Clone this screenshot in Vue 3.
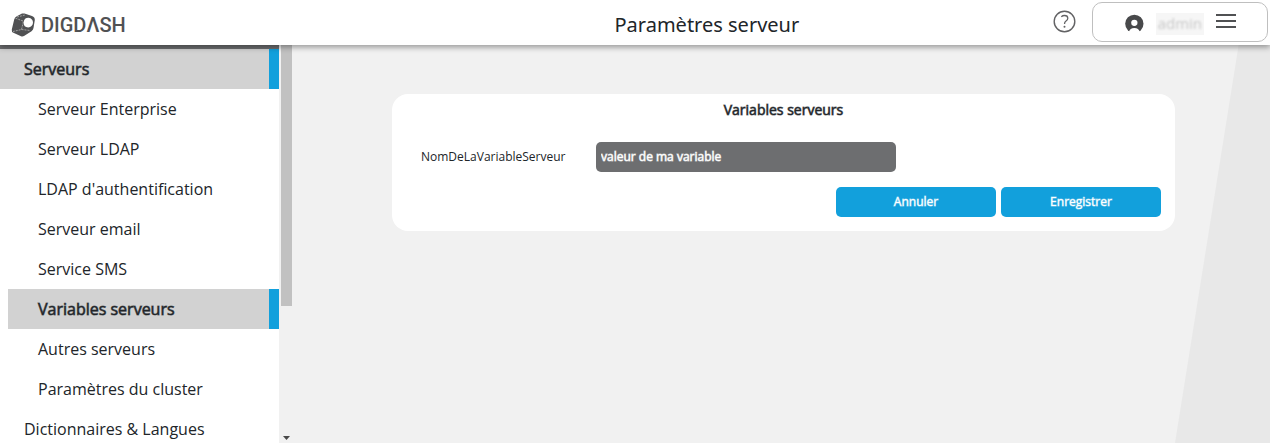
<script setup>
import { ref } from 'vue'

const entries = [
  { label: 'Serveurs', level: 0, active: true },
  { label: 'Serveur Enterprise', level: 1 },
  { label: 'Serveur LDAP', level: 1 },
  { label: "LDAP d'authentification", level: 1 },
  { label: 'Serveur email', level: 1 },
  { label: 'Service SMS', level: 1 },
  { label: 'Variables serveurs', level: 1, active: true },
  { label: 'Autres serveurs', level: 1 },
  { label: 'Paramètres du cluster', level: 1 },
  { label: 'Dictionnaires & Langues', level: 0 },
]
const value = ref('valeur de ma variable')
</script>

<template>
  <div class="page">
    <header class="topbar">
      <a class="brand" href="#">
        <svg width="25" height="24" viewBox="0 0 25 24" aria-hidden="true">
          <path d="M11 .6 Q12 .2 13.5 .6 L21 3 Q24 4 23.8 7 L22.5 15 Q22.2 17 20.5 18.2 L13 23 Q11.5 23.8 10 23.2 L2.4 19.8 Q.4 18.8 .8 16.4 L3.2 6.6 Q3.8 4.2 5.8 3.2 Z" fill="#505153" />
          <path d="M4.5 5.2 L12.5 8.2 L10.5 16.5 L2 18.5 M10.5 16.5 L19 17.5 M6 4 L14 2" fill="none" stroke="#b4b4b4" stroke-width=".8" stroke-dasharray="2 1" />
          <path d="M13.2 7 Q14.5 4.6 17.5 4.8 Q22 5.6 22 9.8 Q21.4 14 17.2 14.6 Q12.6 14 12.6 10 Z" fill="#fff" />
        </svg>
        <span>DIGDΛSH</span>
      </a>
      <h1>Paramètres serveur</h1>
      <button class="icon-button" type="button" aria-label="Aide">
        <svg width="24" height="24" viewBox="0 0 24 24" fill="none" stroke="#626264">
          <circle cx="12.5" cy="11.5" r="10.3" stroke-width="1.4" />
          <path d="M9.3 6.7 Q10.7 5.5 12.5 5.5 Q15.8 5.5 15.8 8.2 Q15.8 9.7 14 11.1 Q12.5 12.2 12.5 14" stroke-width="1.3" />
          <circle cx="12.5" cy="16.8" r="1" fill="#626264" stroke="none" />
        </svg>
      </button>
      <div class="account">
        <svg width="20" height="20" viewBox="0 0 20 20" aria-hidden="true">
          <circle cx="10.5" cy="9.8" r="9.3" fill="#48494b" />
          <circle cx="10.5" cy="8.8" r="3.2" fill="#fff" />
          <path d="M5 18 Q6 14 10.5 14 Q15 14 16 18 L15 20 H6 Z" fill="#fff" />
        </svg>
        <span class="user"><span>admin</span></span>
        <button class="icon-button" type="button" aria-label="Menu">
          <svg width="20" height="16" viewBox="0 0 20 16" stroke="#505153" stroke-width="2">
            <path d="M0 1H20M0 7H20M0 13H20" />
          </svg>
        </button>
      </div>
    </header>

    <div class="body">
      <nav class="sidebar">
        <ul>
          <li v-for="entry in entries" :key="entry.label">
            <a href="#" :class="{ child: entry.level === 1, active: entry.active }">{{ entry.label }}</a>
          </li>
        </ul>
        <div class="track">
          <div class="thumb"></div>
          <svg width="7" height="4" viewBox="0 0 7 4" aria-hidden="true"><path d="M0 0H7L3.5 4Z" fill="#484848" /></svg>
        </div>
      </nav>

      <main>
        <form class="card" @submit.prevent>
          <h2>Variables serveurs</h2>
          <div class="field">
            <label for="variable">NomDeLaVariableServeur</label>
            <input id="variable" v-model="value" type="text" />
          </div>
          <div class="actions">
            <button type="button">Annuler</button>
            <button type="submit">Enregistrer</button>
          </div>
        </form>
      </main>
    </div>
  </div>
</template>

<style>
body {
  margin: 0;
  overflow: hidden;
}
</style>

<style scoped>
* {
  box-sizing: border-box;
}
.page {
  display: flex;
  flex-direction: column;
  height: 100vh;
  font-family: "Open Sans", sans-serif;
  color: #212529;
  background: #f1f1f1;
}
.topbar {
  position: relative;
  z-index: 1;
  display: flex;
  align-items: center;
  flex: none;
  height: 45px;
  padding: 0 2px 1px 11px;
  background: #fff;
  box-shadow: 0 2px 6px rgba(0, 0, 0, 0.4);
}
.brand {
  display: flex;
  align-items: center;
  gap: 5px;
  padding-top: 5px;
  color: #505153;
  font: 500 20px/24px Roboto, sans-serif;
  text-decoration: none;
}
h1 {
  flex: 1;
  margin: 0;
  padding: 5px 0 0 236px;
  font: 400 20px/28px "Noto Sans", sans-serif;
  text-align: center;
}
.icon-button {
  display: flex;
  padding: 0;
  border: 0;
  background: none;
}
.account {
  display: flex;
  align-items: center;
  width: 176px;
  height: 40px;
  margin-left: 16px;
  padding: 0 31px;
  border: 1px solid #bfbfbf;
  border-radius: 10px;
}
.account > svg {
  margin-top: 3px;
}
.user {
  width: 49px;
  height: 22px;
  margin: 3px 12px 0;
  overflow: hidden;
  background: #f6f6f6;
  color: #c8c8c8;
  font-size: 15px;
  line-height: 20px;
  text-align: center;
}
.user span {
  display: block;
  filter: blur(1px);
}
.body {
  display: flex;
  flex: 1;
  min-height: 0;
}
.sidebar {
  display: flex;
  flex: none;
  width: 293px;
  overflow: hidden;
}
ul {
  flex: 1;
  margin: 0;
  padding: 0;
  list-style: none;
  border-top: 4px solid #6d6e70;
  background: #fff;
}
.sidebar a {
  display: block;
  height: 40px;
  padding-left: 24px;
  color: #212529;
  font-size: 16px;
  line-height: 40px;
  text-decoration: none;
}
.sidebar .child {
  margin-left: 8px;
  padding-left: 30px;
}
.sidebar .active {
  border-right: 10px solid #12a0dc;
  background: #d2d2d2;
  -webkit-text-stroke: 1px rgba(33, 37, 41, 0.6);
}
.track {
  display: flex;
  flex-direction: column;
  align-items: center;
  justify-content: space-between;
  width: 14px;
  padding: 0 1px 3px 2px;
}
.thumb {
  width: 100%;
  height: 66%;
  background: #c1c1c1;
}
main {
  position: relative;
  flex: 1;
  padding: 49px 95px 0 99px;
}
main::before {
  position: absolute;
  inset: 0 0 0 auto;
  width: 95px;
  background: #e8e8e8;
  clip-path: polygon(67% 0, 100% 0, 100% 100%, 0 100%);
  content: "";
}
.card {
  position: relative;
  padding: 6px 14px 14px;
  border-radius: 16px;
  background: #fff;
}
h2 {
  margin: 0 0 22px;
  font-size: 14px;
  font-weight: 400;
  line-height: 20px;
  text-align: center;
  -webkit-text-stroke: 1px rgba(33, 37, 41, 0.6);
}
.field {
  display: flex;
  align-items: center;
  padding-left: 15px;
}
label {
  width: 175px;
  padding-bottom: 2px;
  font-size: 12px;
}
input {
  width: 300px;
  height: 30px;
  padding: 0 5px 2px;
  border: 0;
  border-radius: 5px;
  background: #6d6e70;
  color: #fff;
  font: 400 12px "Open Sans", sans-serif;
  -webkit-text-stroke: 1px rgba(255, 255, 255, 0.6);
}
.actions {
  display: flex;
  justify-content: flex-end;
  gap: 5px;
  margin-top: 15px;
}
.actions button {
  width: 160px;
  height: 30px;
  padding: 0 0 2px;
  border: 0;
  border-radius: 5px;
  background: #12a0dc;
  color: #fff;
  font: 400 12px "Open Sans", sans-serif;
  -webkit-text-stroke: 1px rgba(255, 255, 255, 0.5);
}
</style>
